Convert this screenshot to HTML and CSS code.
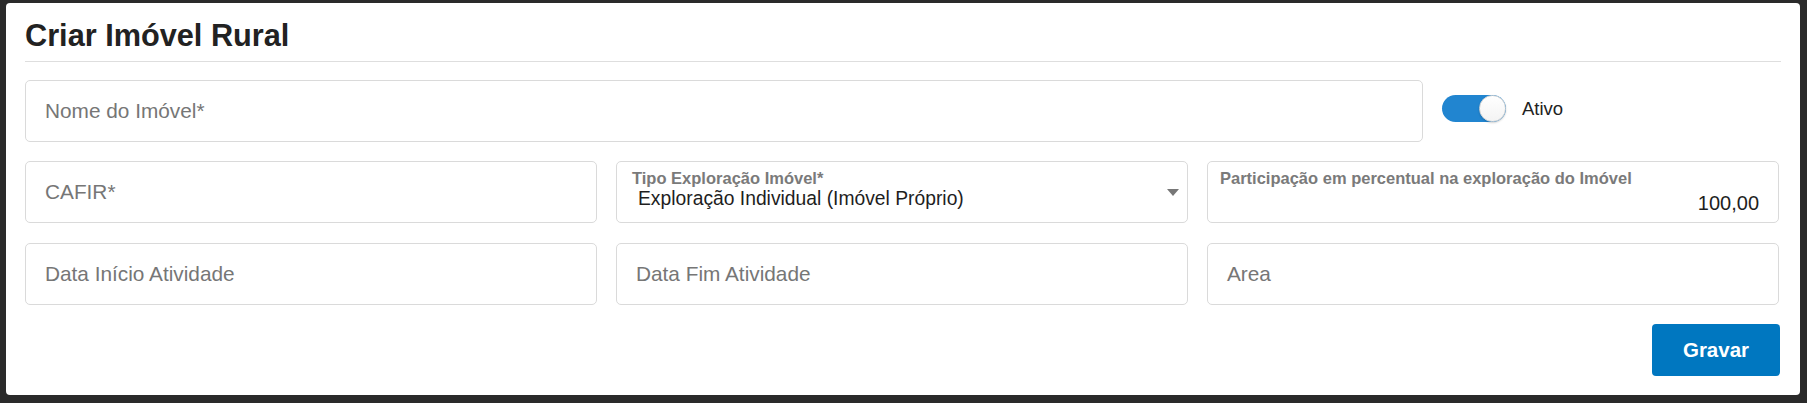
FILE: index.html
```html
<!DOCTYPE html>
<html lang="pt-BR">
<head>
<meta charset="utf-8">
<title>Criar Imóvel Rural</title>
<link rel="stylesheet" href="styles.css">
</head>
<body>
<main class="panel">
  <h1 class="title">Criar Imóvel Rural</h1>
  <div class="row row-first">
    <div class="field"><span class="placeholder">Nome do Imóvel*</span></div>
    <div class="switch-group">
      <span class="switch"><span class="knob"></span></span>
      <span class="switch-label">Ativo</span>
    </div>
  </div>
  <div class="row row-three row-mid">
    <div class="field"><span class="placeholder">CAFIR*</span></div>
    <div class="field field-select">
      <div class="select-body">
        <span class="float-label label-select">Tipo Exploração Imóvel*</span>
        <span class="value">Exploração Individual (Imóvel Próprio)</span>
      </div>
      <span class="caret"></span>
    </div>
    <div class="field field-labeled">
      <span class="float-label label-number">Participação em percentual na exploração do Imóvel</span>
      <span class="value value-number">100,00</span>
    </div>
  </div>
  <div class="row row-three">
    <div class="field"><span class="placeholder">Data Início Atividade</span></div>
    <div class="field"><span class="placeholder">Data Fim Atividade</span></div>
    <div class="field"><span class="placeholder">Area</span></div>
  </div>
  <div class="actions">
    <button class="btn-primary" type="button">Gravar</button>
  </div>
</main>
</body>
</html>
```

FILE: styles.css
```css
html, body {
  margin: 0;
  padding: 0;
}
body {
  background: #2a2a2a;
  font-family: "Liberation Sans", Arial, sans-serif;
  color: #222;
  padding: 3px 7px 8px 6px;
}
.panel {
  background: #fff;
  border-radius: 4px;
  padding: 15px 21px 19px 19px;
}
.title {
  margin: 0;
  font-size: 30.7px;
  line-height: 36px;
  font-weight: 700;
  color: #222;
  padding-bottom: 7px;
  border-bottom: 1px solid #dedede;
  margin-right: -2px;
  margin-bottom: 18px;
}
.row {
  display: grid;
  gap: 19px;
  margin-bottom: 19px;
}
.row-mid {
  margin-bottom: 20px;
}
.row-first {
  grid-template-columns: 1398px 1fr;
  align-items: start;
}
.row-three {
  grid-template-columns: repeat(3, 1fr);
}
.field {
  box-sizing: border-box;
  height: 62px;
  border: 1px solid #dadada;
  border-radius: 5px;
  padding: 0 19px;
  display: flex;
  align-items: center;
}
.placeholder {
  font-size: 20.8px;
  color: #767676;
}
.field-select {
  padding: 0 8px 0 0;
  align-items: stretch;
}
.select-body {
  flex: 1;
  display: flex;
  flex-direction: column;
  padding-top: 7px;
}
.float-label {
  font-size: 16.5px;
  line-height: 19px;
  font-weight: 700;
  color: #7a7a7a;
}
.label-select {
  padding-left: 15px;
}
.value {
  font-size: 20px;
  line-height: 22px;
  color: #1e1e1e;
}
.select-body .value {
  font-size: 19.3px;
  padding-left: 21px;
  margin-top: 0;
}
.caret {
  align-self: center;
  width: 0;
  height: 0;
  border-left: 6px solid transparent;
  border-right: 6px solid transparent;
  border-top: 7px solid #777;
}
.field-labeled {
  flex-direction: column;
  align-items: stretch;
  justify-content: flex-start;
  padding: 7px 19px 0 12px;
}
.value-number {
  text-align: right;
  margin-top: 4px;
}
.switch-group {
  display: flex;
  align-items: center;
  gap: 16px;
  margin-top: 15px;
}
.switch {
  box-sizing: border-box;
  width: 64px;
  height: 27px;
  border-radius: 14px;
  background: #2185d0;
  display: flex;
  justify-content: flex-end;
  align-items: center;
}
.knob {
  box-sizing: border-box;
  width: 27px;
  height: 27px;
  border-radius: 50%;
  background: linear-gradient(#ffffff, #f3f3f3);
  border: 1px solid #d4d4d4;
  box-shadow: 0 1px 2px rgba(0, 0, 0, 0.18);
}
.switch-label {
  font-size: 18.5px;
  color: #222;
}
.actions {
  display: flex;
  justify-content: flex-end;
  margin-right: -1px;
}
.btn-primary {
  width: 128px;
  height: 52px;
  border: none;
  border-radius: 4px;
  background: #0077c0;
  color: #fff;
  font-family: "Liberation Sans", Arial, sans-serif;
  font-size: 20.5px;
  font-weight: 700;
  padding: 0;
}
```
